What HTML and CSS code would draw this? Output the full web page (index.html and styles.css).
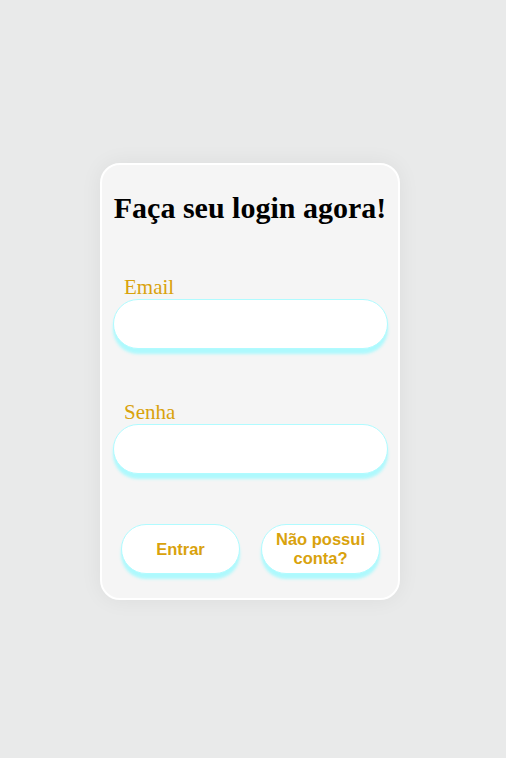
FILE: index.html
```html
<!DOCTYPE html>
<html lang="pt">
<head>
<meta charset="utf-8">
<title>Login</title>
<link rel="stylesheet" href="styles.css">
</head>
<body>
<main class="page">
  <form class="card">
    <h1 class="title">Faça seu login agora!</h1>
    <div class="field">
      <label class="label" for="email">Email</label>
      <input class="input" id="email" type="email">
    </div>
    <div class="field">
      <label class="label" for="senha">Senha</label>
      <input class="input" id="senha" type="password">
    </div>
    <div class="actions">
      <button class="btn" type="button">Entrar</button>
      <button class="btn" type="button">Não possui conta?</button>
    </div>
  </form>
</main>
</body>
</html>
```

FILE: styles.css
```css
html, body {
  margin: 0;
  padding: 0;
}
body {
  background: #e9eaea;
  font-family: "Liberation Serif", "Times New Roman", serif;
}
.page {
  display: flex;
  justify-content: center;
  padding: 163px 6px 0 0;
  min-height: 595px;
}
.card {
  box-sizing: border-box;
  width: 300px;
  height: 437px;
  background: #f5f5f5;
  border: 2px solid #ffffff;
  border-radius: 20px;
  box-shadow: 0 0 22px rgba(0, 0, 0, 0.06);
  display: flex;
  flex-direction: column;
  padding: 0 10px 0 11px;
}
.title {
  margin: 26px -10px 0 -11px;
  text-align: center;
  font-size: 30px;
  font-weight: bold;
  line-height: 34px;
  color: #000;
}
.field {
  display: flex;
  flex-direction: column;
  margin-top: 50px;
}
.field + .field {
  margin-top: 51px;
}
.label {
  color: #d9a20c;
  font-size: 21px;
  line-height: 24px;
  padding-left: 11px;
}
.input {
  box-sizing: border-box;
  width: 275px;
  height: 50px;
  margin: 0;
  border: 1px solid #b0fbff;
  border-radius: 25px;
  background: #ffffff;
  box-shadow: 0 5px 3px #aef9fd;
  outline: none;
}
.actions {
  display: flex;
  justify-content: center;
  gap: 21px;
  margin-top: 50px;
}
.btn {
  box-sizing: border-box;
  width: 119px;
  height: 50px;
  border: 1px solid #b0fbff;
  border-radius: 25px;
  background: #ffffff;
  box-shadow: 0 5px 3px #aef9fd;
  color: #d9a20c;
  font-family: "Liberation Sans", Arial, sans-serif;
  font-weight: bold;
  font-size: 16.5px;
  line-height: 19px;
  padding: 0 12px;
}
```
